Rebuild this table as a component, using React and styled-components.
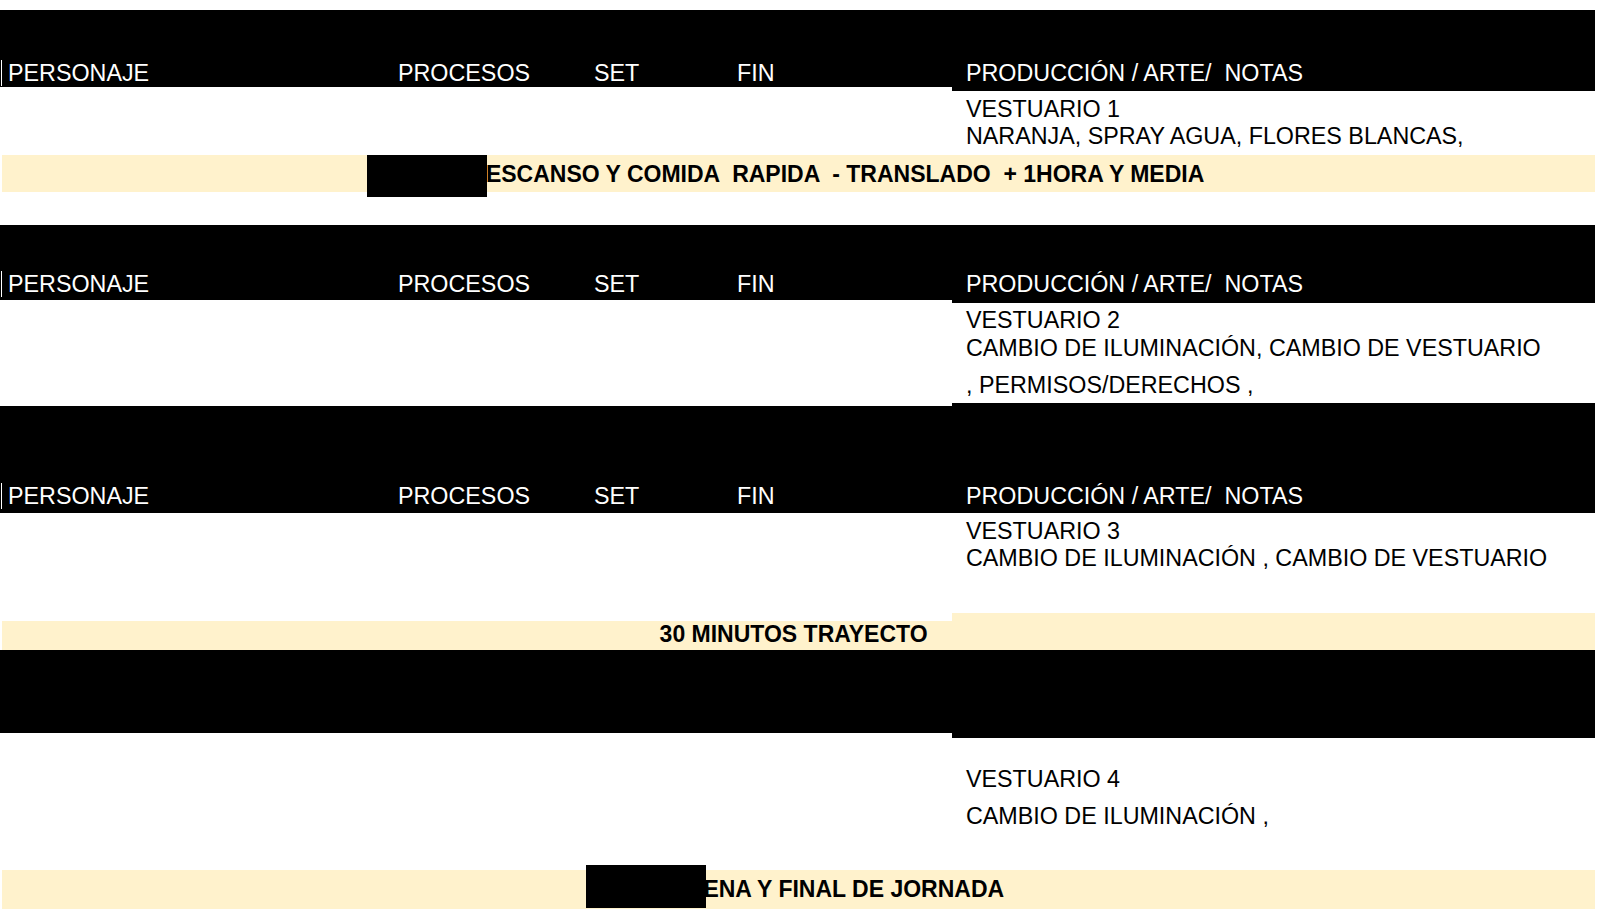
import React from 'react';
import styled, { createGlobalStyle } from 'styled-components';

const GlobalStyle = createGlobalStyle`
  html, body {
    margin: 0;
    padding: 0;
    background: #fff;
  }
  * {
    box-sizing: border-box;
  }
`;

const Page = styled.div`
  width: 1600px;
  height: 916px;
  padding-top: 10px;
  overflow: hidden;
  background: #fff;
  font-family: "Liberation Sans", Arial, sans-serif;
  font-size: 23.3px;
  line-height: 26px;
  color: #000;
`;

const Section = styled.div`
  display: grid;
  grid-template-columns: 952px 643px;
  align-items: start;
  height: ${(p) => p.$h}px;
`;

const HeaderPart = styled.div`
  background: #000;
  color: #fff;
  height: ${(p) => p.$h}px;
  margin-top: ${(p) => p.$mt || 0}px;
  padding-top: ${(p) => p.$pt || 0}px;
`;

const LabelRow = styled.div`
  display: grid;
  grid-template-columns: 389px 196px 143px 1fr;
  box-shadow: inset 1px 0 0 #000, inset 2px 0 0 #fff;
`;

const Label = styled.div`
  padding-left: ${(p) => p.$pl || 9}px;
  white-space: pre;
`;

const NotesCell = styled.div`
  grid-column: 2;
  padding-top: ${(p) => p.$pt}px;
  padding-left: 14px;
`;

const NoteLine = styled.div`
  line-height: 27.6px;
  margin-top: ${(p) => p.$mt || 0}px;
  white-space: pre;
`;

const Band = styled.div`
  position: relative;
  display: flex;
  align-items: center;
  margin-left: 2px;
  width: 1593px;
  height: ${(p) => p.$h}px;
  padding-left: ${(p) => p.$pl}px;
  background: #fff2cc;
  font-size: 23px;
  font-weight: 700;
  white-space: pre;
`;

const BandPart = styled.div`
  display: flex;
  align-items: center;
  height: ${(p) => p.$h}px;
  margin-top: ${(p) => p.$mt || 0}px;
  margin-left: ${(p) => p.$ml || 0}px;
  padding-left: ${(p) => p.$pl || 0}px;
  padding-bottom: ${(p) => p.$pb || 0}px;
  background: #fff2cc;
  font-size: 23px;
  font-weight: 700;
  white-space: pre;
`;

const Redaction = styled.div`
  position: absolute;
  left: ${(p) => p.$left}px;
  top: ${(p) => p.$top}px;
  width: ${(p) => p.$w}px;
  height: ${(p) => p.$h}px;
  background: #000;
`;

const Gap = styled.div`
  height: ${(p) => p.$h}px;
`;

function Header({ left, right, labels = true }) {
  return (
    <Section $h={right.mt ? right.h + right.mt : Math.max(left.h + (left.mt || 0), right.h)}>
      <HeaderPart $h={left.h} $mt={left.mt} $pt={left.pt}>
        {labels && (
          <LabelRow>
            <Label $pl={8}>PERSONAJE</Label>
            <Label>PROCESOS</Label>
            <Label>SET</Label>
            <Label>FIN</Label>
          </LabelRow>
        )}
      </HeaderPart>
      <HeaderPart $h={right.h} $mt={right.mt} $pt={right.pt}>
        {labels && <Label $pl={14}>PRODUCCIÓN / ARTE/  NOTAS</Label>}
      </HeaderPart>
    </Section>
  );
}

function Notes({ h, pt, lines }) {
  return (
    <Section $h={h}>
      <NotesCell $pt={pt}>
        {lines.map((l, i) => (
          <NoteLine key={i} $mt={l.mt}>{l.text}</NoteLine>
        ))}
      </NotesCell>
    </Section>
  );
}

export default function App() {
  return (
    <Page>
      <GlobalStyle />

      <Header left={{ h: 77, pt: 49.6 }} right={{ h: 81, pt: 49.6 }} />
      <Notes
        h={64}
        pt={4.6}
        lines={[
          { text: 'VESTUARIO 1' },
          { text: 'NARANJA, SPRAY AGUA, FLORES BLANCAS,' },
        ]}
      />
      <Band $h={37} $pl={467.3}>
        DESCANSO Y COMIDA  RAPIDA  - TRANSLADO  + 1HORA Y MEDIA
        <Redaction $left={365} $top={0} $w={120} $h={42} />
      </Band>
      <Gap $h={33} />

      <Header left={{ h: 74.6, pt: 46 }} right={{ h: 77.7, pt: 46 }} />
      <Notes
        h={100.3}
        pt={4.5}
        lines={[
          { text: 'VESTUARIO 2' },
          { text: 'CAMBIO DE ILUMINACIÓN, CAMBIO DE VESTUARIO' },
          { text: ', PERMISOS/DERECHOS ,', mt: 9.2 },
        ]}
      />

      <Header left={{ h: 107, mt: 3, pt: 77 }} right={{ h: 110, pt: 80 }} />
      <Notes
        h={100.5}
        pt={4.9}
        lines={[
          { text: 'VESTUARIO 3' },
          { text: 'CAMBIO DE ILUMINACIÓN , CAMBIO DE VESTUARIO' },
        ]}
      />

      <Section $h={36.5}>
        <BandPart $h={29.4} $mt={7.1} $ml={2} $pl={657.6} $pb={3}>30 MINUTOS TRAYECTO</BandPart>
        <BandPart $h={36.5} />
      </Section>

      <Header labels={false} left={{ h: 83 }} right={{ h: 88 }} />
      <Notes
        h={132}
        pt={28.2}
        lines={[
          { text: 'VESTUARIO 4' },
          { text: 'CAMBIO DE ILUMINACIÓN ,', mt: 9.4 },
        ]}
      />

      <Band $h={39} $pl={684.8}>
        CENA Y FINAL DE JORNADA
        <Redaction $left={584} $top={-5} $w={119.5} $h={43} />
      </Band>
    </Page>
  );
}
